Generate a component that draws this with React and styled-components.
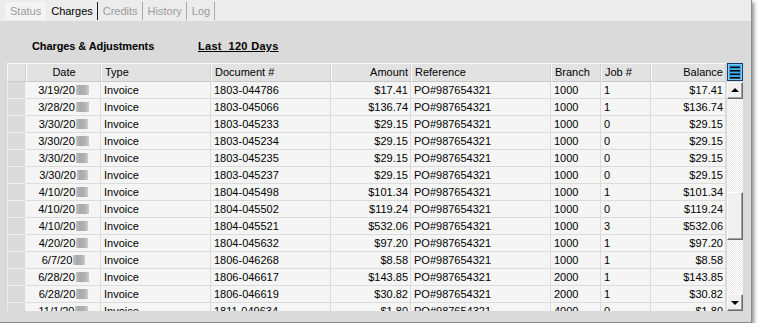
import React from "react";
import styled, { createGlobalStyle } from "styled-components";

const GlobalStyle = createGlobalStyle`
  body {
    margin: 0;
    background: #fff;
    font-family: "Liberation Sans", Arial, sans-serif;
  }
`;

const COLS = "19px 75px 110px 120px 80px 140px 50px 50px 75px";

const Window = styled.div`
  width: 751px;
  height: 322px;
  background: #dadada;
  border-right: 1px solid #8c8c8c;
  border-bottom: 1px solid #8c8c8c;
  box-shadow: 2px 2px 4px rgba(0, 0, 0, 0.45);
  display: flex;
  flex-direction: column;
  overflow: hidden;
`;

const TabStrip = styled.div`
  height: 21px;
  background: #ececec;
  display: flex;
  align-items: center;
  padding-left: 5px;
  flex-shrink: 0;
`;

const Tab = styled.div`
  height: 18px;
  line-height: 18px;
  padding: 0 4px 0 5px;
  font-size: 11px;
  color: ${(p) => (p.$active ? "#000" : "#9a9a9a")};
  background: ${(p) => (p.$first ? "#f4f4f4" : "transparent")};
  border-right: 1px solid
    ${(p) => (p.$active ? "#1a1a1a" : p.$first ? "transparent" : "#a8a8a8")};
`;

const HeadingRow = styled.div`
  height: 42px;
  box-sizing: border-box;
  padding: 19px 0 0 32px;
  display: flex;
  flex-shrink: 0;
  font-size: 11px;
  font-weight: bold;
  line-height: 13px;
  color: #000;
`;

const Title = styled.div`
  width: 166px;
  letter-spacing: -0.1px;
`;

const RangeLink = styled.div`
  text-decoration: underline;
  white-space: pre;
  letter-spacing: 0.3px;
`;

const Grid = styled.div`
  margin-left: 7px;
  width: 736px;
  height: 248px;
  display: flex;
  flex-direction: column;
  overflow: hidden;
  font-size: 11px;
  color: #000;
`;

const HeaderRow = styled.div`
  height: 19px;
  display: flex;
  flex-shrink: 0;
`;

const HeaderCells = styled.div`
  display: grid;
  grid-template-columns: ${COLS};
`;

const HeaderCell = styled.div`
  background: #e2e2e2;
  border-top: 1px solid #fafafa;
  border-left: 1px solid #fafafa;
  border-bottom: 1px solid #c9c9c9;
  border-right: 1px solid #cfcfcf;
  box-sizing: border-box;
  padding: 0 2px 0 3px;
  line-height: 17px;
  white-space: nowrap;
  overflow: hidden;
  text-align: ${(p) => p.$align || "left"};
`;

const ChooserCell = styled.div`
  width: 17px;
  display: flex;
  justify-content: center;
  align-items: flex-start;
`;

const Body = styled.div`
  flex: 1;
  min-height: 0;
  display: flex;
`;

const Rows = styled.div`
  width: 719px;
  display: flex;
  flex-direction: column;
  overflow: hidden;
`;

const Row = styled.div`
  display: grid;
  grid-template-columns: ${COLS};
  height: 17px;
  flex-shrink: 0;
`;

const Cell = styled.div`
  background: #f5f5f5;
  border-right: 1px solid #dcdcdc;
  border-bottom: 1px solid #dcdcdc;
  box-sizing: border-box;
  padding: 0 2px 0 3px;
  line-height: 16px;
  white-space: nowrap;
  overflow: hidden;
  text-align: ${(p) => p.$align || "left"};
`;

const RowHead = styled.div`
  background: #dadada;
  border-left: 1px solid #ececec;
  border-right: 1px solid #f2f2f2;
  border-bottom: 1px solid #f0f0f0;
  box-sizing: border-box;
`;

const Blur = styled.span`
  display: inline-block;
  width: ${(p) => p.$w || 13}px;
  height: 10px;
  margin-left: 1px;
  vertical-align: -1px;
  background: linear-gradient(90deg, #c4c4c4, #a9a9a9 30%, #b2b2b2 70%, #cdcdcd);
  filter: blur(0.4px);
`;

const ScrollBar = styled.div`
  width: 16px;
  margin-left: 1px;
  display: flex;
  flex-direction: column;
  background: repeating-conic-gradient(#ffffff 0 25%, #e9e9e9 0 50%) 0 0 / 2px 2px;
`;

const raised = `
  box-sizing: border-box;
  background: #f0f0f0;
  border: 1px solid;
  border-color: #ffffff #6a6a6a #6a6a6a #ffffff;
  box-shadow: inset -1px -1px 0 #a0a0a0;
`;

const ScrollButton = styled.div`
  ${raised}
  height: 17px;
  flex-shrink: 0;
  display: flex;
  align-items: center;
  justify-content: center;
`;

const Thumb = styled.div`
  ${raised}
  height: 48px;
  margin-top: 93px;
  flex-shrink: 0;
`;

const Spacer = styled.div`
  flex: 1;
`;

const Arrow = styled.span`
  width: 0;
  height: 0;
  border-left: 4px solid transparent;
  border-right: 4px solid transparent;
  ${(p) =>
    p.$dir === "up"
      ? "border-bottom: 4px solid #000; margin-top: -1px;"
      : "border-top: 4px solid #000; margin-top: 1px;"}
`;

const ChooserIcon = () => (
  <svg width="16" height="18" viewBox="0 0 16 18">
    <rect x="0.5" y="0.5" width="15" height="17" fill="#3fadef" stroke="#1b3a66" />
    <rect x="1.5" y="1.5" width="13" height="15" fill="none" stroke="#7fcaf5" />
    <rect x="3" y="3.5" width="10" height="1.6" fill="#0d0d0d" />
    <rect x="3" y="7" width="10" height="1.6" fill="#0d0d0d" />
    <rect x="3" y="10.5" width="10" height="1.6" fill="#0d0d0d" />
    <rect x="3" y="14" width="10" height="1.6" fill="#0d0d0d" />
  </svg>
);

const columns = [
  { key: "date", label: "Date", align: "center" },
  { key: "type", label: "Type" },
  { key: "doc", label: "Document #" },
  { key: "amount", label: "Amount", align: "right" },
  { key: "ref", label: "Reference" },
  { key: "branch", label: "Branch" },
  { key: "job", label: "Job #" },
  { key: "balance", label: "Balance", align: "right" },
];

const charges = [
  ["3/19/20", "1803-044786", "$17.41", "1000", "1", 13],
  ["3/28/20", "1803-045066", "$136.74", "1000", "1", 13],
  ["3/30/20", "1803-045233", "$29.15", "1000", "0", 12],
  ["3/30/20", "1803-045234", "$29.15", "1000", "0", 13],
  ["3/30/20", "1803-045235", "$29.15", "1000", "0", 12],
  ["3/30/20", "1803-045237", "$29.15", "1000", "0", 11],
  ["4/10/20", "1804-045498", "$101.34", "1000", "1", 12],
  ["4/10/20", "1804-045502", "$119.24", "1000", "0", 13],
  ["4/10/20", "1804-045521", "$532.06", "1000", "3", 12],
  ["4/20/20", "1804-045632", "$97.20", "1000", "1", 12],
  ["6/7/20", "1806-046268", "$8.58", "1000", "1", 12],
  ["6/28/20", "1806-046617", "$143.85", "2000", "1", 13],
  ["6/28/20", "1806-046619", "$30.82", "2000", "1", 12],
  ["11/1/20", "1811-049634", "$1.80", "4000", "0", 13],
].map(([date, doc, amount, branch, job, blur]) => ({
  date,
  blur,
  type: "Invoice",
  doc,
  amount,
  ref: "PO#987654321",
  branch,
  job,
  balance: amount,
}));

export default function App() {
  return (
    <>
      <GlobalStyle />
      <Window>
        <TabStrip>
          <Tab $first>Status</Tab>
          <Tab $active>Charges</Tab>
          <Tab>Credits</Tab>
          <Tab>History</Tab>
          <Tab>Log</Tab>
        </TabStrip>
        <HeadingRow>
          <Title>Charges &amp; Adjustments</Title>
          <RangeLink>Last  120 Days</RangeLink>
        </HeadingRow>
        <Grid>
          <HeaderRow>
            <HeaderCells>
              <HeaderCell />
              {columns.map((c) => (
                <HeaderCell key={c.key} $align={c.align}>
                  {c.label}
                </HeaderCell>
              ))}
            </HeaderCells>
            <ChooserCell>
              <ChooserIcon />
            </ChooserCell>
          </HeaderRow>
          <Body>
            <Rows>
              {charges.map((r, i) => (
                <Row key={i}>
                  <RowHead />
                  {columns.map((c) => (
                    <Cell key={c.key} $align={c.align}>
                      {r[c.key]}
                      {c.key === "date" && <Blur $w={r.blur} />}
                    </Cell>
                  ))}
                </Row>
              ))}
            </Rows>
            <ScrollBar>
              <ScrollButton>
                <Arrow $dir="up" />
              </ScrollButton>
              <Thumb />
              <Spacer />
              <ScrollButton>
                <Arrow $dir="down" />
              </ScrollButton>
            </ScrollBar>
          </Body>
        </Grid>
      </Window>
    </>
  );
}
